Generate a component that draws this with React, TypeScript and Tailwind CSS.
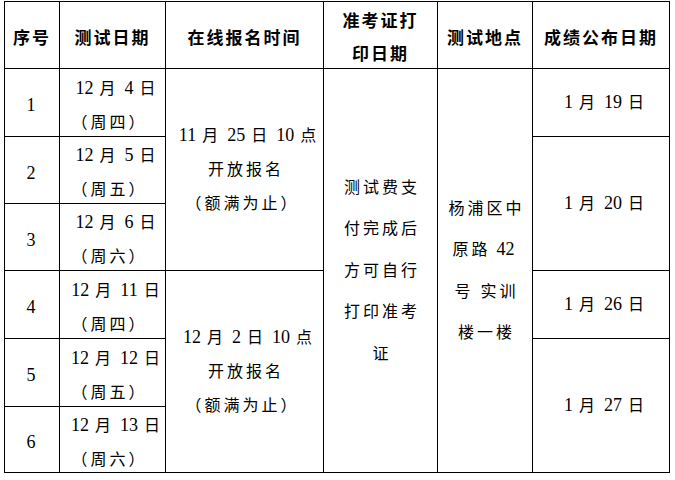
import React from "react";

const font = "font-['Liberation_Serif','Noto_Sans_CJK_SC',serif]";

type CellProps = {
  className?: string;
  children?: React.ReactNode;
};

// one grid cell; every cell draws its own right and bottom rule
const Cell = ({ className = "", children }: CellProps) => (
  <div
    className={`flex flex-col items-center justify-center border-r border-b border-black text-center ${className}`}
  >
    {children}
  </div>
);

const Head = ({ className = "", children }: CellProps) => (
  <Cell className={`pt-[6px] text-[17px] font-bold leading-[33px] tracking-[2px] ${className}`}>{children}</Cell>
);

const Line = ({ children }: { children: React.ReactNode }) => (
  <div className="whitespace-pre pl-[3px]">{children}</div>
);

// latin digits sit a little larger than the CJK text, with a small gap either side
const N = ({ children }: { children: React.ReactNode }) => (
  <span className="mx-[6px] text-[18px] tracking-normal">{children}</span>
);

const dates = [
  { no: "1", day: "4", week: "（周四）", row: "row-start-2" },
  { no: "2", day: "5", week: "（周五）", row: "row-start-3" },
  { no: "3", day: "6", week: "（周六）", row: "row-start-4" },
  { no: "4", day: "11", week: "（周四）", row: "row-start-5" },
  { no: "5", day: "12", week: "（周五）", row: "row-start-6" },
  { no: "6", day: "13", week: "（周六）", row: "row-start-7" },
];

export default function App() {
  return (
    <div className={`min-h-[480px] w-[675px] bg-white pl-[4px] pt-[1px] text-black ${font}`}>
      <div className="grid w-max grid-cols-[55px_106px_158px_114px_95px_137px] grid-rows-[67px_68px_67px_67px_68px_68px_66px] border-t border-l border-black text-[16px] tracking-[3px] [text-spacing-trim:space-all]">
        {/* header */}
        <Head className="col-start-1 row-start-1">序号</Head>
        <Head className="col-start-2 row-start-1">测试日期</Head>
        <Head className="col-start-3 row-start-1">在线报名时间</Head>
        <Head className="col-start-4 row-start-1">
          <div>准考证打</div>
          <div>印日期</div>
        </Head>
        <Head className="col-start-5 row-start-1">测试地点</Head>
        <Head className="col-start-6 row-start-1">成绩公布日期</Head>

        {/* number + test date columns */}
        {dates.map((d) => (
          <React.Fragment key={d.no}>
            <Cell className={`col-start-1 pr-[2px] pt-[6px] ${d.row}`}>
              <N>{d.no}</N>
            </Cell>
            <Cell className={`col-start-2 pt-[5px] leading-[34px] ${d.row}`}>
              <Line>
                <N>12</N>月<N>{d.day}</N>日
              </Line>
              <div className="-ml-[6px] whitespace-pre">{d.week}</div>
            </Cell>
          </React.Fragment>
        ))}

        {/* online registration */}
        <Cell className="col-start-3 row-span-3 row-start-2 leading-[34px]">
          <Line>
            <N>11</N>月<N>25</N>日<N>10</N>点
          </Line>
          <Line>开放报名</Line>
          <div className="-ml-[4px] whitespace-pre">（额满为止）</div>
        </Cell>
        <Cell className="col-start-3 row-span-3 row-start-5 leading-[34px]">
          <Line>
            <N>12</N>月<N>2</N>日<N>10</N>点
          </Line>
          <Line>开放报名</Line>
          <div className="-ml-[4px] whitespace-pre">（额满为止）</div>
        </Cell>

        {/* admission ticket */}
        <Cell className="col-start-4 row-span-6 row-start-2 leading-[41.5px]">
          <Line>测试费支</Line>
          <Line>付完成后</Line>
          <Line>方可自行</Line>
          <Line>打印准考</Line>
          <Line>证</Line>
        </Cell>

        {/* location */}
        <Cell className="col-start-5 row-span-6 row-start-2 leading-[41.5px]">
          <Line>杨浦区中</Line>
          <Line>
            原路<N>42</N>
          </Line>
          <Line>号 实训</Line>
          <Line>楼一楼</Line>
        </Cell>

        {/* results */}
        <Cell className="col-start-6 row-start-2">
          <Line>
            <N>1</N>月<N>19</N>日
          </Line>
        </Cell>
        <Cell className="col-start-6 row-span-2 row-start-3">
          <Line>
            <N>1</N>月<N>20</N>日
          </Line>
        </Cell>
        <Cell className="col-start-6 row-start-5">
          <Line>
            <N>1</N>月<N>26</N>日
          </Line>
        </Cell>
        <Cell className="col-start-6 row-span-2 row-start-6">
          <Line>
            <N>1</N>月<N>27</N>日
          </Line>
        </Cell>
      </div>
    </div>
  );
}
